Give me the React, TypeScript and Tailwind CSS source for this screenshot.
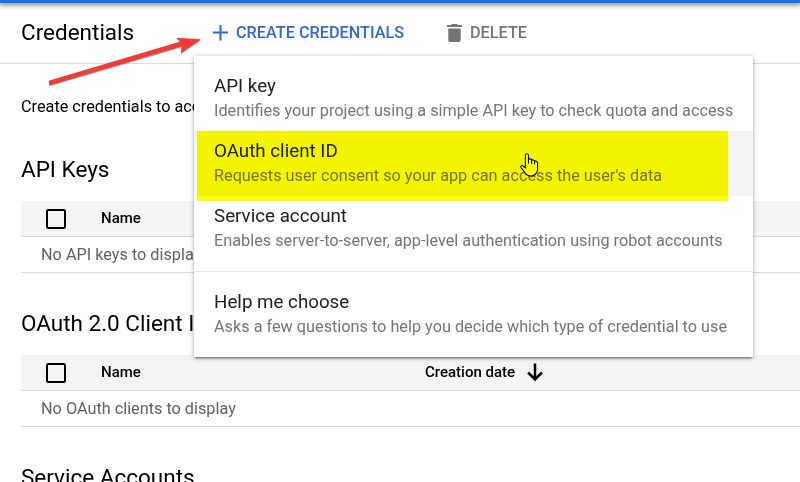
import React from "react";

function Checkbox() {
  return <span className="ml-[25px] block size-5 shrink-0 rounded-[2.5px] border-2 border-black" />;
}

function Table({ empty, date }: { empty: string; date?: boolean }) {
  return (
    <div className="ml-[21px]">
      <div className="flex h-9 items-center border-b border-[#dadada] bg-[#f4f4f4] text-[15px] font-medium">
        <Checkbox />
        <span className="ml-[35px] w-[324px] leading-5 -mt-[2px]">Name</span>
        {date && (
          <>
            <span className="-mt-[2px] leading-5">Creation date</span>
            <svg className="-mt-[2px] ml-3 h-5 w-4" viewBox="0 0 16 20" fill="none" stroke="#000" strokeWidth="2.5">
              <path d="M8 1.5V18M1.1 10.5L8 17.4L14.9 10.5" />
            </svg>
          </>
        )}
      </div>
      <div className="h-9 border-b border-[#dadada] pl-5 text-[16.25px] leading-[35px] text-[#616161]">{empty}</div>
    </div>
  );
}

function Item({ title, text, active }: { title: string; text: string; active?: boolean }) {
  return (
    <div className={active ? "h-[65px] bg-[#f4f4f4] pl-5 pt-2" : "h-[65px] pl-5 pt-2"}>
      <div className="h-6 text-[18.75px] leading-[25px] text-[#212121]">{title}</div>
      <div className="text-[16.25px] leading-[25px] text-[#757575]">{text}</div>
    </div>
  );
}

export default function App() {
  return (
    <div className="relative h-[482px] w-[800px] overflow-hidden whitespace-nowrap bg-white font-['Roboto',sans-serif] text-black">
      <div className="h-[3px] bg-[#1a73e8] shadow-[0_1px_5px_1px_rgba(0,0,0,0.5)]" />
      <header className="flex h-[61px] items-center border-b border-[#dadada] pl-[21px]">
        <h1 className="w-[191px] pb-[2px] text-[22.5px] leading-[30px]">Credentials</h1>
        <div className="flex w-[235px] items-center text-[16.25px] font-medium text-[#3367d6]">
          <svg className="mr-2 size-4" viewBox="0 0 16 16" stroke="currentColor" strokeWidth="2.1">
            <path d="M8.5 0V15.5M.7 7.5H16" />
          </svg>
          CREATE CREDENTIALS
        </div>
        <div className="flex items-center text-[16.25px] font-medium text-[#757575]">
          <svg className="mr-2 h-[18px] w-[15px]" viewBox="0 0 15 18" fill="currentColor">
            <path d="M0 1H4L5 0H10L11 1H15V3H0ZM1.3 4.5H13.7V16Q13.7 18 12 18H3Q1.3 18 1.3 16Z" />
          </svg>
          DELETE
        </div>
      </header>
      <main>
        <p className="ml-[21px] mt-[30px] h-[25px] w-[173px] overflow-hidden text-[16.25px] leading-[25px]">Create credentials to access</p>
        <h2 className="ml-[21px] mt-[35px] h-[30px] text-[22.5px] leading-[30px]">API Keys</h2>
        <div className="h-[17px]" />
        <Table empty="No API keys to display" />
        <h2 className="ml-[21px] mt-[35px] h-[30px] text-[22.5px] leading-[30px]">OAuth 2.0 Client IDs</h2>
        <div className="h-[17px]" />
        <Table empty="No OAuth clients to display" date />
        <h2 className="ml-[21px] mt-[35px] h-[30px] text-[22.5px] leading-[30px]">Service Accounts</h2>
      </main>

      <div className="absolute left-[194px] top-[56px] h-[301px] w-[559px] bg-white pt-[10px] shadow-[0_2px_2px_-1px_rgba(0,0,0,0.5),0_1px_5px_rgba(0,0,0,0.3)]">
        <Item title="API key" text="Identifies your project using a simple API key to check quota and access" />
        <Item active title="OAuth client ID" text="Requests user consent so your app can access the user's data" />
        <Item title="Service account" text="Enables server-to-server, app-level authentication using robot accounts" />
        <div className="mb-[10px] mt-[10px] h-px bg-[#e4e4e4]" />
        <Item title="Help me choose" text="Asks a few questions to help you decide which type of credential to use" />
      </div>

      <svg className="absolute left-[520px] top-[152px] h-[26px] w-5" viewBox="0 0 20 26" fill="#fff" stroke="#000" strokeWidth="1.1" strokeLinejoin="round" strokeLinecap="round">
        <path d="M5.4 16V3.2C5.4 1.2 8.5 1.2 8.5 3.2V7.2C9.2 6.6 11.4 6.7 11.6 8.2C12.5 7.5 14.5 7.8 14.6 9.3C15.5 8.7 17.6 9 17.6 11V17C17.6 21 14.5 24 10.8 24C7.5 24 6 22.5 4.6 20.3L1.2 15.8C0 14 1.6 12.9 3 13.9L5.4 16Z" />
        <path fill="none" d="M8.5 6V11.2M11.6 8V11.5M14.6 9V12" />
      </svg>
      <div className="absolute left-[197px] top-[131px] h-[70px] w-[531px] bg-[#ffff00] mix-blend-multiply" />
      <svg className="absolute left-10 top-8 h-14 w-[168px] drop-shadow-[0.5px_1px_0.5px_rgba(0,0,0,0.4)]" viewBox="40 32 168 56">
        <path fill="#f23b37" d="M48.7 80.8L180.5 41.6L176.5 37.8L201 39.2L180.8 53.2L181.8 46.2L49.5 85.3Z" />
      </svg>
    </div>
  );
}
